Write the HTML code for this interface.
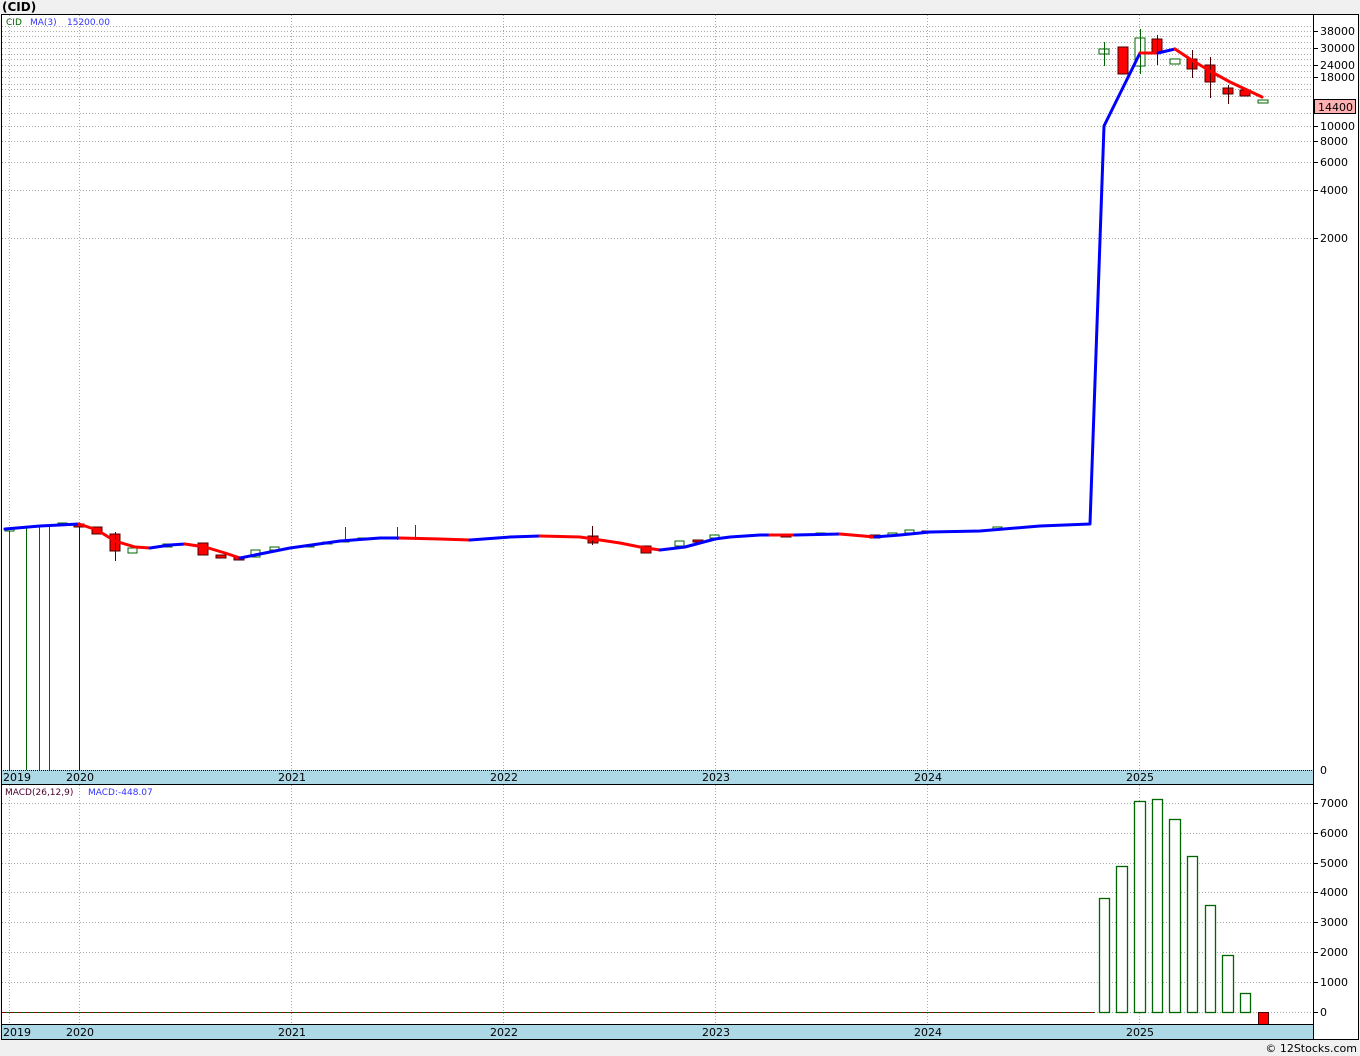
<!DOCTYPE html>
<html><head><meta charset="utf-8"><style>
html,body{margin:0;padding:0;background:#f0f0f0;width:1360px;height:1056px;overflow:hidden}
svg{display:block;font-family:"DejaVu Sans","Liberation Sans",sans-serif}
</style></head><body>
<svg width="1360" height="1056" xmlns="http://www.w3.org/2000/svg">
<rect x="0" y="0" width="1360" height="1056" fill="#f0f0f0"/>
<text x="2" y="11" font-size="12" font-weight="bold" fill="#000">(CID)</text>
<rect x="1" y="14" width="1358" height="1026" fill="#fff"/>
<g stroke="#aaa" stroke-dasharray="1,2" stroke-width="1">
<line x1="2" x2="1313" y1="26.5" y2="26.5"/><line x1="2" x2="1313" y1="31.5" y2="31.5"/>
<line x1="2" x2="1313" y1="36.5" y2="36.5"/><line x1="2" x2="1313" y1="42.5" y2="42.5"/>
<line x1="2" x2="1313" y1="48.5" y2="48.5"/><line x1="2" x2="1313" y1="54.5" y2="54.5"/>
<line x1="2" x2="1313" y1="59.5" y2="59.5"/><line x1="2" x2="1313" y1="65.5" y2="65.5"/>
<line x1="2" x2="1313" y1="71.5" y2="71.5"/><line x1="2" x2="1313" y1="77.5" y2="77.5"/>
<line x1="2" x2="1313" y1="84.5" y2="84.5"/><line x1="2" x2="1313" y1="89.5" y2="89.5"/>
<line x1="2" x2="1313" y1="96.5" y2="96.5"/><line x1="2" x2="1313" y1="113.5" y2="113.5"/>
<line x1="2" x2="1313" y1="126.5" y2="126.5"/><line x1="2" x2="1313" y1="141.5" y2="141.5"/>
<line x1="2" x2="1313" y1="162.5" y2="162.5"/><line x1="2" x2="1313" y1="190.5" y2="190.5"/>
<line x1="2" x2="1313" y1="238.5" y2="238.5"/>
<line x1="9.5" x2="9.5" y1="15" y2="770"/><line x1="79.5" x2="79.5" y1="15" y2="770"/>
<line x1="291.5" x2="291.5" y1="15" y2="770"/><line x1="503.5" x2="503.5" y1="15" y2="770"/>
<line x1="715.5" x2="715.5" y1="15" y2="770"/><line x1="927.5" x2="927.5" y1="15" y2="770"/>
<line x1="1139.5" x2="1139.5" y1="15" y2="770"/>
<line x1="2" x2="1313" y1="803.5" y2="803.5"/><line x1="2" x2="1313" y1="833.5" y2="833.5"/>
<line x1="2" x2="1313" y1="863.5" y2="863.5"/><line x1="2" x2="1313" y1="892.5" y2="892.5"/>
<line x1="2" x2="1313" y1="922.5" y2="922.5"/><line x1="2" x2="1313" y1="952.5" y2="952.5"/>
<line x1="2" x2="1313" y1="982.5" y2="982.5"/><line x1="2" x2="1313" y1="1012.5" y2="1012.5"/>
<line x1="9.5" x2="9.5" y1="785" y2="1024"/><line x1="79.5" x2="79.5" y1="785" y2="1024"/>
<line x1="291.5" x2="291.5" y1="785" y2="1024"/><line x1="503.5" x2="503.5" y1="785" y2="1024"/>
<line x1="715.5" x2="715.5" y1="785" y2="1024"/><line x1="927.5" x2="927.5" y1="785" y2="1024"/>
<line x1="1139.5" x2="1139.5" y1="785" y2="1024"/>
</g>
<text x="6" y="25" font-size="9" fill="#006400">CID</text>
<text x="30" y="25" font-size="9" fill="#3333ff">MA(3)</text>
<text x="67" y="25" font-size="9" fill="#3333ff">15200.00</text>
<g stroke-width="1">
<line x1="9.5" x2="9.5" y1="530" y2="770" stroke="#006400"/>
<line x1="26.5" x2="26.5" y1="528" y2="770" stroke="#006400"/>
<line x1="39.5" x2="39.5" y1="527" y2="770" stroke="#006400"/>
<line x1="49.5" x2="49.5" y1="526" y2="770" stroke="#006400"/>
<line x1="79.5" x2="79.5" y1="524" y2="770" stroke="#4a0000"/>
</g>
<g stroke-width="1">
<g stroke="#006400" fill="#fff">
<rect x="5" y="528" width="9" height="3"/><rect x="58" y="523" width="9" height="2"/>
<rect x="128" y="548" width="9" height="5"/><rect x="163" y="544" width="9" height="3"/>
<rect x="251" y="550" width="9" height="7"/><rect x="270" y="547" width="9" height="3"/>
<rect x="305" y="545" width="9" height="2"/><rect x="323" y="542" width="9" height="2"/>
<rect x="340" y="540" width="9" height="2"/><rect x="358" y="538" width="9" height="2"/>
<rect x="675" y="541" width="9" height="5"/><rect x="710" y="535" width="9" height="3"/>
<rect x="816" y="533" width="9" height="2"/><rect x="888" y="533" width="9" height="2"/>
<rect x="905" y="530" width="9" height="3"/><rect x="993" y="527" width="9" height="2"/>
<rect x="1099" y="49" width="10" height="5"/><rect x="1135" y="38" width="10" height="28"/>
<rect x="1170" y="59" width="10" height="5"/><rect x="1258" y="100" width="10" height="3"/>
</g>
<g stroke="#006400"><line x1="345.5" x2="345.5" y1="527" y2="542"/><line x1="397.5" x2="397.5" y1="527" y2="540"/><line x1="415.5" x2="415.5" y1="525" y2="540"/>
<line x1="1104.5" x2="1104.5" y1="42" y2="66"/><line x1="1140.5" x2="1140.5" y1="29" y2="74"/></g>
<g stroke="#4a0000" fill="#ff0000">
<rect x="74" y="524" width="10" height="3"/><rect x="92" y="527" width="10" height="7"/>
<rect x="110" y="534" width="10" height="17"/><rect x="198" y="543" width="10" height="12"/>
<rect x="216" y="555" width="10" height="3"/><rect x="234" y="557" width="10" height="3"/>
<rect x="588" y="536" width="10" height="7"/><rect x="641" y="546" width="10" height="7"/>
<rect x="693" y="540" width="10" height="2"/><rect x="781" y="534" width="10" height="3"/>
<rect x="870" y="535" width="10" height="3"/><rect x="922" y="531" width="10" height="2"/>
<rect x="1118" y="47" width="10" height="27"/><rect x="1152" y="39" width="10" height="14"/>
<rect x="1187" y="59" width="10" height="10"/><rect x="1205" y="65" width="10" height="17"/>
<rect x="1223" y="88" width="10" height="6"/><rect x="1240" y="90" width="10" height="6"/>
</g>
<g stroke="#4a0000"><line x1="115.5" x2="115.5" y1="532" y2="561"/><line x1="592.5" x2="592.5" y1="526" y2="545"/>
<line x1="1157.5" x2="1157.5" y1="35" y2="65"/><line x1="1210.5" x2="1210.5" y1="57" y2="98"/><line x1="1192.5" x2="1192.5" y1="50" y2="78"/><line x1="1228.5" x2="1228.5" y1="85" y2="104"/></g>
</g>
<g fill="none" stroke-width="3" stroke-linejoin="round" stroke-linecap="round">
<polyline stroke="#0000ff" points="5,529 40,526 79,524"/>
<polyline stroke="#ff0000" points="79,524 97,530 115,541 135,547 150,548"/>
<polyline stroke="#0000ff" points="150,548 170,545 185,544"/>
<polyline stroke="#ff0000" points="185,544 205,547 225,553 240,558"/>
<polyline stroke="#0000ff" points="240,558 265,553 290,548 340,541 380,538 400,538"/>
<polyline stroke="#ff0000" points="400,538 440,539 470,540"/>
<polyline stroke="#0000ff" points="470,540 510,537 540,536"/>
<polyline stroke="#ff0000" points="540,536 580,537 600,540 620,543 640,547 660,550"/>
<polyline stroke="#0000ff" points="660,550 685,547 700,543 715,539 730,537 760,535 770,535"/>
<polyline stroke="#ff0000" points="770,535 795,535"/>
<polyline stroke="#0000ff" points="795,535 840,534"/>
<polyline stroke="#ff0000" points="840,534 875,537"/>
<polyline stroke="#0000ff" points="875,537 900,535 930,532 980,531 1040,526 1090,524 1104,126 1140,53"/>
<polyline stroke="#ff0000" points="1140,53 1158,53"/>
<polyline stroke="#0000ff" points="1158,53 1175,49"/>
<polyline stroke="#ff0000" points="1175,49 1190,59 1210,71 1230,82 1262,97"/>
</g>
<g fill="#fff" stroke="#006400" stroke-width="1.3">
<rect x="1099.5" y="898.5" width="10" height="114"/><rect x="1116.5" y="866.5" width="11" height="146"/>
<rect x="1134.5" y="801.5" width="11" height="211"/><rect x="1152.5" y="799.5" width="10" height="213"/>
<rect x="1169.5" y="819.5" width="11" height="193"/><rect x="1187.5" y="856.5" width="10" height="156"/>
<rect x="1205.5" y="905.5" width="10" height="107"/><rect x="1222.5" y="955.5" width="11" height="57"/>
<rect x="1240.5" y="993.5" width="10" height="19"/>
</g>
<rect x="1258.5" y="1012.5" width="10" height="12" fill="#ff0000" stroke="#4a0000"/>
<line x1="2" x2="1095" y1="1012.5" y2="1012.5" stroke="#8b0000" stroke-dasharray="4,4" stroke-width="1"/>
<line x1="6" x2="1095" y1="1012.5" y2="1012.5" stroke="#006400" stroke-dasharray="4,4" stroke-width="1"/>
<text x="5" y="795" font-size="9" fill="#4a0030">MACD(26,12,9)</text>
<text x="88" y="795" font-size="9" fill="#3333ff">MACD:-448.07</text>
<rect x="1" y="770" width="1312" height="14" fill="#add8e6"/>
<rect x="1" y="1025" width="1312" height="14" fill="#add8e6"/>
<line x1="1" x2="1313" y1="770.5" y2="770.5" stroke="#000" stroke-dasharray="1,1"/>
<line x1="1" x2="1313" y1="784.5" y2="784.5" stroke="#000"/>
<line x1="1" x2="1313" y1="1024.5" y2="1024.5" stroke="#000"/>
<g font-size="11" fill="#000">
<text x="3" y="781">2019</text><text x="66" y="781">2020</text><text x="278" y="781">2021</text><text x="490" y="781">2022</text><text x="702" y="781">2023</text><text x="914" y="781">2024</text><text x="1126" y="781">2025</text>
<text x="3" y="1036">2019</text><text x="66" y="1036">2020</text><text x="278" y="1036">2021</text><text x="490" y="1036">2022</text><text x="702" y="1036">2023</text><text x="914" y="1036">2024</text><text x="1126" y="1036">2025</text>
</g>
<line x1="1313.5" x2="1313.5" y1="14" y2="1040" stroke="#000"/>
<rect x="1.5" y="14.5" width="1357" height="1025" fill="none" stroke="#000"/>
<g font-size="11" fill="#000">
<text x="1320" y="35">38000</text><text x="1320" y="52">30000</text><text x="1320" y="69">24000</text>
<text x="1320" y="81">18000</text><text x="1320" y="130">10000</text><text x="1320" y="145">8000</text>
<text x="1320" y="166">6000</text><text x="1320" y="194">4000</text><text x="1320" y="242">2000</text>
<text x="1320" y="774">0</text>
<text x="1320" y="807">7000</text><text x="1320" y="837">6000</text><text x="1320" y="867">5000</text>
<text x="1320" y="896">4000</text><text x="1320" y="926">3000</text><text x="1320" y="956">2000</text>
<text x="1320" y="986">1000</text><text x="1320" y="1016">0</text>
</g>
<g stroke="#000"><line x1="1313" x2="1318" y1="31.5" y2="31.5"/><line x1="1313" x2="1318" y1="48.5" y2="48.5"/><line x1="1313" x2="1318" y1="65.5" y2="65.5"/><line x1="1313" x2="1318" y1="77.5" y2="77.5"/><line x1="1313" x2="1318" y1="126.5" y2="126.5"/><line x1="1313" x2="1318" y1="141.5" y2="141.5"/><line x1="1313" x2="1318" y1="162.5" y2="162.5"/><line x1="1313" x2="1318" y1="190.5" y2="190.5"/><line x1="1313" x2="1318" y1="238.5" y2="238.5"/>
<line x1="1313" x2="1318" y1="803.5" y2="803.5"/><line x1="1313" x2="1318" y1="833.5" y2="833.5"/><line x1="1313" x2="1318" y1="863.5" y2="863.5"/><line x1="1313" x2="1318" y1="892.5" y2="892.5"/><line x1="1313" x2="1318" y1="922.5" y2="922.5"/><line x1="1313" x2="1318" y1="952.5" y2="952.5"/><line x1="1313" x2="1318" y1="982.5" y2="982.5"/><line x1="1313" x2="1318" y1="1012.5" y2="1012.5"/></g>
<rect x="1314.5" y="99.5" width="41" height="14" fill="#ffb0b0" stroke="#000"/>
<text x="1318" y="111" font-size="11" fill="#000">14400</text>
<text x="1357" y="1052" font-size="11" fill="#000" text-anchor="end">© 12Stocks.com</text>
</svg>
</body></html>
